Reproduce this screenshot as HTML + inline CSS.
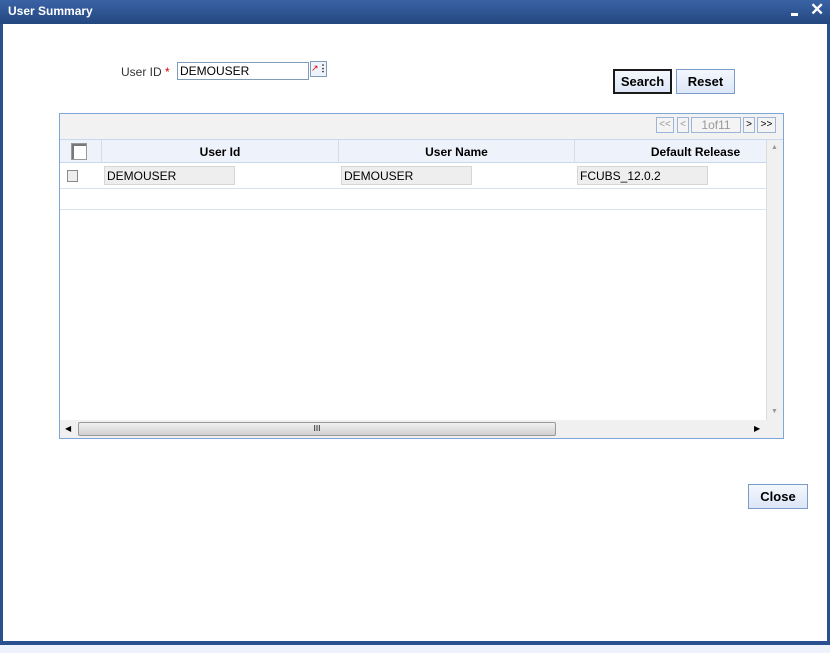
<!DOCTYPE html>
<html><head><style>
*{margin:0;padding:0;box-sizing:border-box}
body{width:830px;height:653px;position:relative;background:#fff;font-family:"Liberation Sans",Arial,sans-serif;font-size:12px;color:#000;overflow:hidden}
.a{position:absolute}
.btn{position:absolute;border:1px solid #7a9cc8;background:linear-gradient(#f4f7fd,#dde6f7);font-weight:bold;font-size:13px;text-align:center}
.cell{position:absolute;background:#eeeeee;border:1px solid #d6d6d6;height:19px;padding:2px 2px;font-size:12px}
.pg{position:absolute;top:117px;height:16px;border:1px solid #9cb5d6;background:#f4f4f4;color:#999;font-size:10px;text-align:center;line-height:14px}
</style></head><body>
<div class="a" style="left:0;top:0;width:830px;height:24px;background:linear-gradient(#3a63a6,#23477f);"></div>
<div class="a" style="left:8px;top:4px;color:#fff;font-weight:bold;font-size:12px">User Summary</div>
<div class="a" style="left:791px;top:13px;width:7px;height:3px;background:#fff"></div>
<div class="a" style="left:810px;top:0px;color:#fff;font-weight:bold;font-size:17px">✕</div>
<div class="a" style="left:0;top:24px;width:3px;height:620px;background:#2b5090"></div>
<div class="a" style="left:827px;top:24px;width:3px;height:620px;background:#2b5090"></div>
<div class="a" style="left:0;top:641px;width:830px;height:4px;background:#2b5090"></div>
<div class="a" style="left:0;top:645px;width:830px;height:8px;background:#eef3fb"></div>

<div class="a" style="left:121px;top:65px;color:#333;font-size:12px">User ID <span style="color:#d00">*</span></div>
<div class="a" style="left:177px;top:62px;width:132px;height:18px;border:1px solid #7f9db9;padding:1px 2px;font-size:12px">DEMOUSER</div>
<div class="a" style="left:310px;top:61px;width:17px;height:16px;border:1px solid #7f9db9;background:#eef2fa;font-size:9px;line-height:13px;text-align:center"><span style="color:#d00">↗</span><b>⋮</b></div>
<div class="btn" style="left:613px;top:69px;width:59px;height:25px;border:2px solid #1a1a1a;line-height:21px">Search</div>
<div class="btn" style="left:676px;top:69px;width:59px;height:25px;line-height:23px">Reset</div>

<div class="a" style="left:59px;top:113px;width:725px;height:326px;border:1px solid #7fa6d8;background:#fff"></div>
<div class="a" style="left:60px;top:114px;width:723px;height:25px;background:#f2f2f2"></div>
<div class="pg" style="left:656px;width:18px">&lt;&lt;</div>
<div class="pg" style="left:677px;width:12px">&lt;</div>
<div class="pg" style="left:691px;width:50px;font-size:12px">1of11</div>
<div class="pg" style="left:743px;width:12px;color:#000">&gt;</div>
<div class="pg" style="left:757px;width:19px;color:#000">&gt;&gt;</div>
<div class="a" style="left:60px;top:139px;width:723px;height:1px;background:#c8d8ee"></div>
<div class="a" style="left:60px;top:140px;width:706px;height:23px;background:#eef2fb;border-bottom:1px solid #c8d8ee"></div>
<div class="a" style="left:101px;top:140px;width:1px;height:23px;background:#d4dcea"></div>
<div class="a" style="left:338px;top:140px;width:1px;height:23px;background:#d4dcea"></div>
<div class="a" style="left:574px;top:140px;width:1px;height:23px;background:#d4dcea"></div>
<div class="a" style="left:71px;top:143px;width:16px;height:17px;border:1px solid #999;background:#fff;box-shadow:inset 2px 2px 0 #777"></div>
<div class="a" style="left:102px;top:145px;width:236px;text-align:center;font-weight:bold">User Id</div>
<div class="a" style="left:339px;top:145px;width:235px;text-align:center;font-weight:bold">User Name</div>
<div class="a" style="left:575px;top:145px;width:191px;text-align:center;font-weight:bold;padding-left:50px">Default Release</div>
<div class="a" style="left:67px;top:170px;width:11px;height:12px;border:1px solid #888;background:#eee"></div>
<div class="cell" style="left:104px;top:166px;width:131px">DEMOUSER</div>
<div class="cell" style="left:341px;top:166px;width:131px">DEMOUSER</div>
<div class="cell" style="left:577px;top:166px;width:131px">FCUBS_12.0.2</div>
<div class="a" style="left:60px;top:188px;width:706px;height:1px;background:#d8e3f2"></div>
<div class="a" style="left:60px;top:209px;width:706px;height:1px;background:#d8e3f2"></div>
<div class="a" style="left:766px;top:140px;width:17px;height:280px;background:#f0f0f0;border-left:1px solid #ddd"></div>
<div class="a" style="left:771px;top:144px;font-size:7px;color:#999">▲</div>
<div class="a" style="left:771px;top:408px;font-size:7px;color:#999">▼</div>
<div class="a" style="left:60px;top:420px;width:723px;height:18px;background:#f0f0f0"></div>
<div class="a" style="left:65px;top:424px;font-size:8px">◀</div>
<div class="a" style="left:78px;top:422px;width:478px;height:14px;border:1px solid #999;border-radius:2px;background:linear-gradient(#f0f0f0,#d0d0d0);text-align:center;font-size:8px;line-height:12px">III</div>
<div class="a" style="left:754px;top:424px;font-size:8px">▶</div>

<div class="btn" style="left:748px;top:484px;width:60px;height:25px;line-height:23px">Close</div>
</body></html>
